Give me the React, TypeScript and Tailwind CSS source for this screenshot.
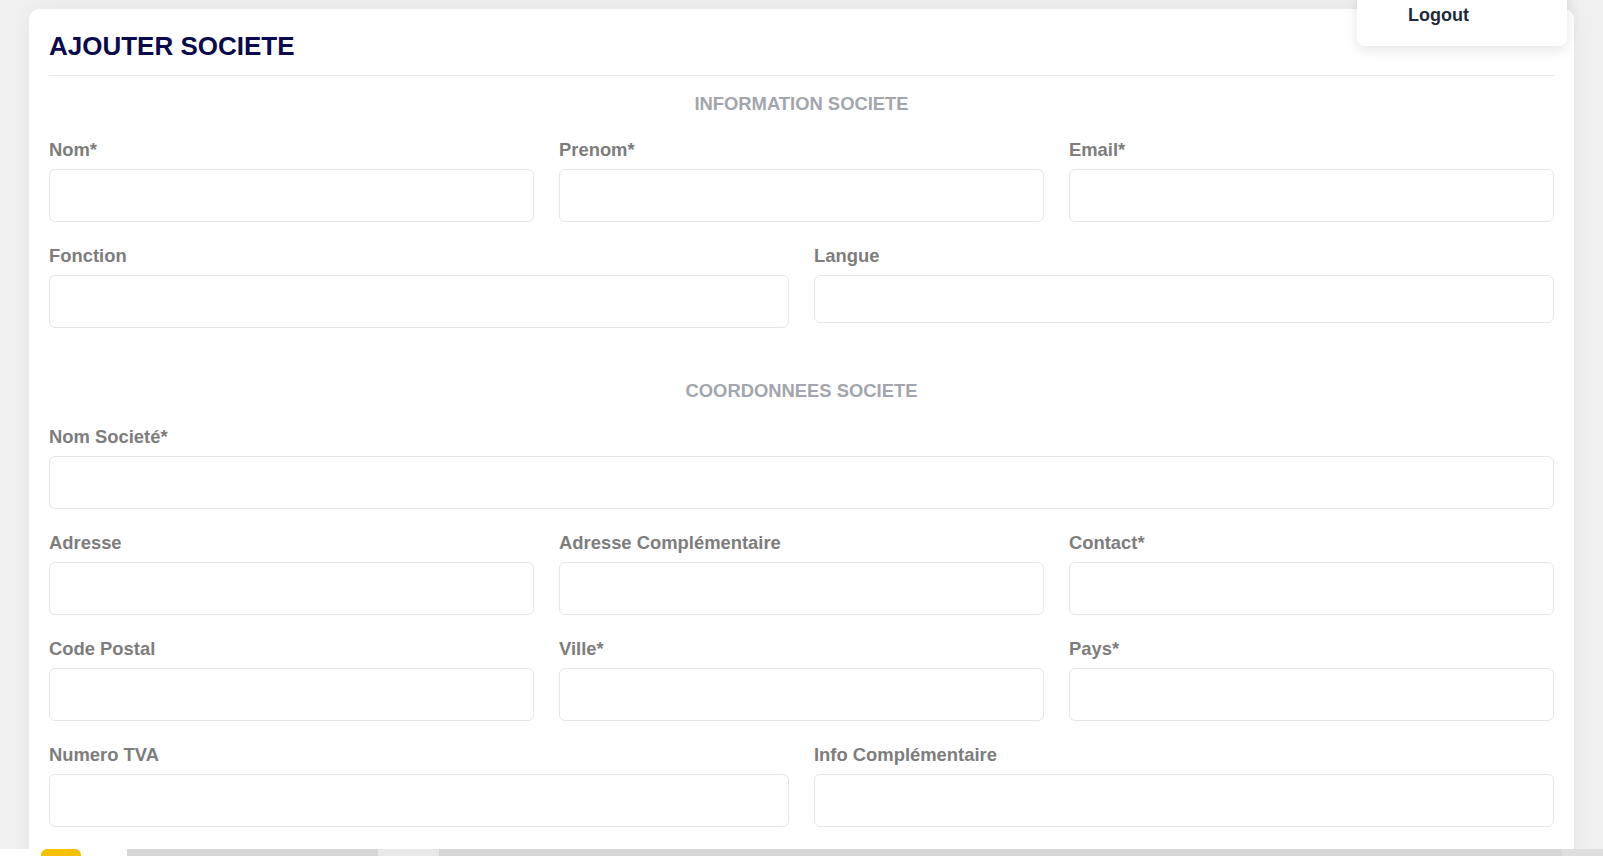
import React from "react";

type Field = { label: string; short?: boolean };

function FormField({ label, short }: Field) {
  return (
    <div className="flex flex-col">
      <label className="block text-[18.4px] leading-[27px] font-bold text-[#7d7d7d] mb-[6px]">
        {label}
      </label>
      <input
        type="text"
        className={`w-full rounded-[6px] border border-[#e6e6e6] bg-white px-3 outline-none ${
          short ? "h-[48px]" : "h-[53px]"
        }`}
      />
    </div>
  );
}

function SectionTitle({ children, className = "" }: { children: React.ReactNode; className?: string }) {
  return (
    <h3 className={`text-center text-[18.4px] leading-[27px] font-bold text-[#a2a6ac] ${className}`}>
      {children}
    </h3>
  );
}

export default function App() {
  return (
    <div
      className="relative h-[856px] w-full overflow-hidden bg-[#f0f0f0] flex flex-col"
      style={{ fontFamily: '"Liberation Sans", Arial, sans-serif' }}
    >
      <main className="flex-1 overflow-hidden px-[29px] pt-[9px]">
        <div className="rounded-[10px] bg-white px-[20px] pt-[18px] pb-10 shadow-[0_0_18px_rgba(0,0,0,0.05)]">
          <h1 className="text-[26px] leading-[39px] font-bold text-[#0a0a4d] pb-[9px] border-b border-[#e8e8e8]">
            AJOUTER SOCIETE
          </h1>

          <SectionTitle className="mt-[14px]">INFORMATION SOCIETE</SectionTitle>

          <div className="mt-[19px] flex flex-col gap-[20px]">
            <div className="grid grid-cols-3 gap-x-[25px]">
              <FormField label="Nom*" />
              <FormField label="Prenom*" />
              <FormField label="Email*" />
            </div>
            <div className="grid grid-cols-2 gap-x-[25px] items-start">
              <FormField label="Fonction" />
              <FormField label="Langue" short />
            </div>
          </div>

          <SectionTitle className="mt-[49px]">COORDONNEES SOCIETE</SectionTitle>

          <div className="mt-[19px] flex flex-col gap-[20px]">
            <FormField label="Nom Societé*" />
            <div className="grid grid-cols-3 gap-x-[25px]">
              <FormField label="Adresse" />
              <FormField label="Adresse Complémentaire" />
              <FormField label="Contact*" />
            </div>
            <div className="grid grid-cols-3 gap-x-[25px]">
              <FormField label="Code Postal" />
              <FormField label="Ville*" />
              <FormField label="Pays*" />
            </div>
            <div className="grid grid-cols-2 gap-x-[25px]">
              <FormField label="Numero TVA" />
              <FormField label="Info Complémentaire" />
            </div>
          </div>
        </div>
      </main>

      <div className="absolute right-[36px] top-[-20px] w-[210px] h-[66px] rounded-[8px] bg-white shadow-[0_4px_14px_rgba(0,0,0,0.10)] flex items-end pb-[21px] pl-[51px]">
        <span className="text-[18px] leading-[27px] font-bold text-[#1f2a3a] -mb-[4px]">Logout</span>
      </div>

      <div className="h-[7px] flex shrink-0">
        <div className="w-[127px] bg-white relative">
          <div className="absolute left-[41px] top-0 h-[7px] w-[40px] rounded-t-[6px] bg-[#f5c000]" />
        </div>
        <div className="w-[251px] bg-[#d6d6d6]" />
        <div className="w-[61px] bg-[#e8e8e8]" />
        <div className="flex-1 bg-[#d6d6d6]" />
        <div className="w-[41px] bg-[#dedede]" />
      </div>
    </div>
  );
}
